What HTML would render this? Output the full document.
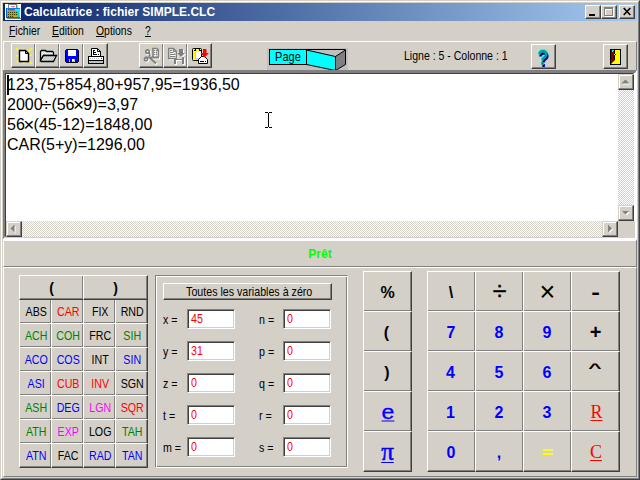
<!DOCTYPE html>
<html lang="fr"><head><meta charset="utf-8"><title>Calculatrice : fichier SIMPLE.CLC</title>
<style>
html,body{margin:0;padding:0}
body{width:640px;height:480px;overflow:hidden;background:#d4d0c8;position:relative;font-family:"Liberation Sans",sans-serif;font-size:13px;color:#000;cursor:default}
.a,.t,.b,.k,.f,.in{position:absolute;box-sizing:border-box}
.t{white-space:nowrap}
.op{display:inline-block;width:8.8px;text-indent:-1.5px;font-size:19px;line-height:1px;position:relative;top:.6px}
u{text-decoration:underline;text-decoration-thickness:1px;text-underline-offset:1px}
.win{left:0;top:0;width:640px;height:480px;border:1px solid;border-color:#d4d0c8 #404040 #404040 #d4d0c8}
.win2{left:1px;top:1px;width:638px;height:478px;border:1px solid;border-color:#fff #808080 #808080 #fff}
.title{left:3px;top:3px;width:634px;height:18px;background:linear-gradient(90deg,#0a246a,#a6caf0)}
.raised{border:1px solid;border-color:#fff #808080 #808080 #fff}
/* standard button: white TL, 808080 inner BR, 404040 outer BR */
.b{background:#d4d0c8;border:1px solid;border-color:#fff #404040 #404040 #fff;box-shadow:inset -1px -1px 0 #808080}
.sunk{border:1px solid;border-color:#808080 #fff #fff #808080;box-shadow:inset 1px 1px 0 #404040, inset -1px -1px 0 #d4d0c8}
.chk{background-color:#fff;background-image:linear-gradient(45deg,#d4d0c8 25%,transparent 25%,transparent 75%,#d4d0c8 75%),linear-gradient(45deg,#d4d0c8 25%,transparent 25%,transparent 75%,#d4d0c8 75%);background-size:2px 2px;background-position:0 0,1px 1px}
.f{width:33px;height:25px;background:#d4d0c8;border:1px solid;border-color:#fff #404040 #404040 #fff;box-shadow:inset -1px -1px 0 #808080}
.k{width:49px;height:41px;background:#d4d0c8;border:1px solid;border-color:#fff #404040 #404040 #fff;box-shadow:inset -1px -1px 0 #808080}
.in{width:48px;height:20px;background:#fff;border:1px solid;border-color:#808080 #fff #fff #808080;box-shadow:inset 1px 1px 0 #404040, inset -1px -1px 0 #d4d0c8}
.lbl{position:absolute;left:0;top:0;width:100%;height:100%;display:flex;align-items:center;justify-content:center;white-space:nowrap}
svg{position:absolute;overflow:visible}
</style></head><body>

<div class="a win"></div><div class="a win2"></div>
<div class="a title"></div>
<span class="t ttl" style="top:5px;font-size:13px;line-height:13px;left:24px;transform-origin:0 50%;transform:scaleX(0.925);color:#fff;font-weight:bold;">Calculatrice : fichier SIMPLE.CLC</span>
<svg style="left:5px;top:4px" width="16" height="16" viewBox="5 4 16 16" shape-rendering="crispEdges"><rect x="5" y="4" width="16" height="16" fill="#fff"/><rect x="8" y="4" width="9" height="1" fill="#808080"/><rect x="8" y="5" width="1" height="3" fill="#808080"/><rect x="16" y="5" width="1" height="3" fill="#808080"/><rect x="17" y="5" width="1" height="3" fill="#c0c0c0"/><rect x="11" y="6" width="4" height="1" fill="#ff8080"/><rect x="12" y="7" width="2" height="1" fill="#ffc0c0"/><rect x="6" y="8" width="14" height="10" fill="#0060c0"/><rect x="7" y="9" width="13" height="8" fill="#0ff"/><rect x="6" y="8" width="14" height="1" fill="#0080ff"/><rect x="7" y="11" width="12" height="6" fill="#00d8d8"/><rect x="8" y="9" width="7" height="2" fill="#c04040"/><rect x="8" y="10" width="7" height="1" fill="#a08080"/><rect x="8" y="12" width="1" height="1" fill="#404000"/><rect x="10" y="12" width="1" height="1" fill="#404000"/><rect x="12" y="12" width="1" height="1" fill="#404000"/><rect x="14" y="12" width="1" height="1" fill="#404000"/><rect x="16" y="12" width="1" height="1" fill="#404000"/><rect x="8" y="14" width="1" height="1" fill="#404000"/><rect x="10" y="14" width="1" height="1" fill="#404000"/><rect x="12" y="14" width="1" height="1" fill="#404000"/><rect x="14" y="14" width="1" height="1" fill="#404000"/><rect x="16" y="14" width="1" height="1" fill="#404000"/><rect x="8" y="16" width="1" height="1" fill="#404000"/><rect x="10" y="16" width="1" height="1" fill="#404000"/><rect x="12" y="16" width="1" height="1" fill="#404000"/><rect x="14" y="16" width="1" height="1" fill="#404000"/><rect x="16" y="16" width="1" height="1" fill="#404000"/><rect x="14" y="16" width="3" height="1" fill="#c0c000"/><rect x="7" y="18" width="14" height="1" fill="#808080"/></svg>
<div class="b" style="left:585px;top:5px;width:16px;height:14px"></div>
<div class="b" style="left:601px;top:5px;width:16px;height:14px"></div>
<div class="b" style="left:619px;top:5px;width:16px;height:14px"></div>
<div class="a" style="left:589px;top:14px;width:6px;height:2px;background:#000"></div>
<div class="a" style="left:605px;top:8px;width:9px;height:9px;border:1px solid #fff;border-top-width:2px"></div>
<div class="a" style="left:604px;top:7px;width:9px;height:9px;border:1px solid #808080;border-top-width:2px"></div>
<svg style="left:623px;top:8px" width="8" height="7" viewBox="0 0 8 7"><path d="M0.7 0L7.3 7M7.3 0L0.7 7" stroke="#000" stroke-width="1.6" fill="none"/></svg>
<span class="t " style="top:24px;font-size:13px;line-height:13px;left:9px;transform-origin:0 50%;transform:scaleX(0.8);"><u>F</u>ichier</span>
<span class="t " style="top:24px;font-size:13px;line-height:13px;left:52px;transform-origin:0 50%;transform:scaleX(0.8);"><u>E</u>dition</span>
<span class="t " style="top:24px;font-size:13px;line-height:13px;left:96px;transform-origin:0 50%;transform:scaleX(0.8);"><u>O</u>ptions</span>
<span class="t " style="top:24px;font-size:13px;line-height:13px;left:145px;transform-origin:0 50%;transform:scaleX(0.8);"><u>?</u></span>
<div class="a raised" style="left:3px;top:41px;width:634px;height:30px"></div>
<div class="b" style="left:11px;top:43px;width:25px;height:25px"></div>
<div class="b" style="left:35px;top:43px;width:25px;height:25px"></div>
<div class="b" style="left:59px;top:43px;width:25px;height:25px"></div>
<div class="b" style="left:83px;top:43px;width:25px;height:25px"></div>
<div class="b" style="left:139px;top:43px;width:25px;height:25px"></div>
<div class="b" style="left:163px;top:43px;width:25px;height:25px"></div>
<div class="b" style="left:187px;top:43px;width:25px;height:25px"></div>
<div class="b" style="left:531px;top:44px;width:25px;height:25px"></div>
<div class="b" style="left:603px;top:44px;width:25px;height:25px"></div>
<span class="t " style="top:49px;font-size:13px;line-height:13px;left:404px;transform-origin:0 50%;transform:scaleX(0.81);">Ligne : 5 - Colonne : 1</span>
<svg style="left:11px;top:44px" width="24" height="24" viewBox="11 44 24 24"><line x1="16" y1="48" x2="18.5" y2="50.5" stroke="#ff0" stroke-width="1.4"/><line x1="23" y1="48.5" x2="24" y2="50" stroke="#ff0" stroke-width="1.4"/><line x1="32" y1="48" x2="27.5" y2="52.5" stroke="#ff0" stroke-width="1.4"/><line x1="16" y1="56" x2="18.5" y2="55.5" stroke="#ff0" stroke-width="1.4"/><line x1="29.5" y1="55.5" x2="32" y2="55" stroke="#ff0" stroke-width="1.4"/><line x1="16.5" y1="62.5" x2="19" y2="60.5" stroke="#ff0" stroke-width="1.4"/><line x1="23.5" y1="62" x2="24.5" y2="64" stroke="#ff0" stroke-width="1.4"/><line x1="29" y1="61" x2="32" y2="64" stroke="#ff0" stroke-width="1.4"/><path d="M19.5 50.5H25.5L28.5 53.5V61.5H19.5Z" fill="#fff" stroke="#000" stroke-width="1.4"/><path d="M25.5 50.5V53.5H28.5" fill="none" stroke="#000" stroke-width="1"/></svg>
<svg style="left:35px;top:44px" width="24" height="24" viewBox="35 44 24 24"><defs><pattern id="d1" width="2" height="2" patternUnits="userSpaceOnUse"><rect width="2" height="2" fill="#ff0"/><rect width="1" height="1" fill="#fff"/><rect x="1" y="1" width="1" height="1" fill="#fff"/></pattern><pattern id="d2" width="2" height="2" patternUnits="userSpaceOnUse"><rect width="2" height="2" fill="#ff0"/><rect width="1" height="1" fill="#c0c0c0"/><rect x="1" y="1" width="1" height="1" fill="#c0c0c0"/></pattern></defs><path d="M40.5 51.5L41.5 50.5H45.5L46.5 51.5H52.5L53.5 52.5V55.5H43.5L40.5 60.5Z" fill="url(#d1)" stroke="#000" stroke-width="1.3"/><path d="M43.5 55.5H56.5L53.5 61.5H41.5L40.5 60.5Z" fill="url(#d2)" stroke="#000" stroke-width="1.3"/></svg>
<svg style="left:59px;top:44px" width="24" height="24" viewBox="59 44 24 24"><path d="M66.5 49.5H77.5L78.5 50.5V61.5L77.5 62.5H66.5L65.5 61.5V50.5Z" fill="#00f" stroke="#000" stroke-width="1"/><rect x="68" y="50" width="8" height="6" fill="#fff"/><rect x="69" y="59" width="6" height="3" fill="#c0c0c0"/><rect x="70" y="59" width="2" height="3" fill="#00f"/><rect x="72" y="59" width="2" height="2" fill="#fff"/><rect x="68" y="57" width="8" height="1" fill="#0000c0"/></svg>
<svg style="left:83px;top:44px" width="24" height="24" viewBox="83 44 24 24"><path d="M91.5 48.5H97.5L100.5 51.5V56.5H91.5Z" fill="#fff" stroke="#000" stroke-width="1"/><path d="M97.5 48.5V51.5H100.5" fill="none" stroke="#000"/><rect x="93" y="50" width="2" height="1" fill="#000"/><rect x="93" y="52" width="3" height="1" fill="#000"/><rect x="93" y="54" width="4" height="1" fill="#000"/><rect x="98" y="54" width="1" height="1" fill="#000"/><rect x="93" y="51" width="1" height="3" fill="#000"/><rect x="88" y="56" width="16" height="8" fill="#000"/><rect x="89" y="57" width="14" height="3" fill="#fff"/><rect x="89" y="61" width="14" height="2" fill="#c0c0c0"/><rect x="90" y="58" width="1" height="1" fill="#c0c0c0"/><rect x="92" y="58" width="1" height="1" fill="#c0c0c0"/><rect x="94" y="58" width="1" height="1" fill="#c0c0c0"/><rect x="96" y="58" width="1" height="1" fill="#c0c0c0"/><rect x="98" y="58" width="1" height="1" fill="#c0c0c0"/><rect x="101" y="58" width="1" height="1" fill="#f00"/></svg>
<svg style="left:139px;top:44px" width="24" height="24" viewBox="139 44 24 24"><g transform="translate(1,1)" fill="#fff" stroke="#fff"><path d="M153 57V48.5H157L158.5 50V57" fill="none" stroke-width="1.6"/><rect x="154" y="50" width="1" height="1" stroke="none"/><rect x="154" y="52" width="1" height="1" stroke="none"/><rect x="154" y="54" width="1" height="1" stroke="none"/><rect x="156" y="52" width="1" height="1" stroke="none"/><rect x="156" y="54" width="1" height="1" stroke="none"/><rect x="156" y="50" width="2" height="1" stroke="none"/><circle cx="147.5" cy="51.5" r="1.7" fill="none" stroke-width="1.7"/><circle cx="146" cy="59.3" r="1.6" fill="none" stroke-width="1.7"/><path d="M149.3 52.5L149.8 56.5" fill="none" stroke-width="1.8"/><path d="M145 57.5H159" fill="none" stroke-width="1.9"/><path d="M150 58L156 63.5" fill="none" stroke-width="2"/></g><g fill="#808080" stroke="#808080"><path d="M153 57V48.5H157L158.5 50V57" fill="none" stroke-width="1.6"/><rect x="154" y="50" width="1" height="1" stroke="none"/><rect x="154" y="52" width="1" height="1" stroke="none"/><rect x="154" y="54" width="1" height="1" stroke="none"/><rect x="156" y="52" width="1" height="1" stroke="none"/><rect x="156" y="54" width="1" height="1" stroke="none"/><rect x="156" y="50" width="2" height="1" stroke="none"/><circle cx="147.5" cy="51.5" r="1.7" fill="none" stroke-width="1.7"/><circle cx="146" cy="59.3" r="1.6" fill="none" stroke-width="1.7"/><path d="M149.3 52.5L149.8 56.5" fill="none" stroke-width="1.8"/><path d="M145 57.5H159" fill="none" stroke-width="1.9"/><path d="M150 58L156 63.5" fill="none" stroke-width="2"/></g></svg>
<svg style="left:163px;top:44px" width="24" height="24" viewBox="163 44 24 24"><g transform="translate(1,1)" fill="#fff" stroke="#fff"><path d="M168.7 48.5H173.5L176.5 51.5V58.5H168.7Z" fill="none" stroke-width="1.5"/><path d="M173.5 48.5V51.5H176.5" fill="none"/><rect x="170" y="50" width="2" height="1" stroke="none"/><rect x="170" y="52" width="3" height="1" stroke="none"/><rect x="170" y="54" width="5" height="1" stroke="none"/><rect x="170" y="56" width="5" height="1" stroke="none"/><path d="M179 49h4v4h2l-4 4l-4 -4h2z" stroke="none"/><rect x="174" y="59" width="2" height="5" stroke="none"/><rect x="182" y="57" width="2" height="7" stroke="none"/><rect x="176" y="59" width="6" height="1" stroke="none"/></g><g fill="#808080" stroke="#808080"><path d="M168.7 48.5H173.5L176.5 51.5V58.5H168.7Z" fill="none" stroke-width="1.5"/><path d="M173.5 48.5V51.5H176.5" fill="none"/><rect x="170" y="50" width="2" height="1" stroke="none"/><rect x="170" y="52" width="3" height="1" stroke="none"/><rect x="170" y="54" width="5" height="1" stroke="none"/><rect x="170" y="56" width="5" height="1" stroke="none"/><path d="M179 49h4v4h2l-4 4l-4 -4h2z" stroke="none"/><rect x="174" y="59" width="2" height="5" stroke="none"/><rect x="182" y="57" width="2" height="7" stroke="none"/><rect x="176" y="59" width="6" height="1" stroke="none"/></g></svg>
<svg style="left:187px;top:44px" width="24" height="24" viewBox="187 44 24 24"><rect x="192.5" y="48.5" width="9" height="12" rx="1" fill="#ff0" stroke="#000"/><rect x="195" y="52" width="6" height="7" fill="#c0c0ff"/><rect x="196" y="52" width="5" height="6" fill="#fff"/><rect x="195" y="48" width="5" height="2" fill="#000"/><rect x="196" y="49" width="3" height="2" fill="#ff0"/><rect x="194" y="50" width="2" height="1" fill="#000"/><rect x="199" y="50" width="2" height="1" fill="#000"/><path d="M198.5 63.5V59.5L201.5 56.5H204.5L207.5 59.5V63.5Z" fill="#fff" stroke="#000"/><rect x="200" y="61" width="4" height="1" fill="#000"/><rect x="205" y="61" width="1" height="1" fill="#000"/><path d="M203 49h3.5v4h2.4l-4.2 4.6l-4.2 -4.6h2.5z" fill="#f00"/></svg>
<svg style="left:603px;top:44px" width="24" height="24" viewBox="603 44 24 24"><rect x="610" y="49" width="11" height="16" fill="#000"/><rect x="611" y="50" width="9" height="14" fill="#ff0"/><path d="M611 50h4v10l-4 4z" fill="#800000"/><rect x="614" y="50" width="1" height="10" fill="#000"/><rect x="612" y="50" width="2" height="1" fill="#0ff"/><rect x="612" y="51" width="1" height="1" fill="#0ff"/><rect x="615" y="54" width="1" height="1" fill="#000"/><rect x="614" y="54" width="1" height="1" fill="#ff0"/></svg>
<span class="t" style="left:531px;top:45px;width:24px;height:24px;line-height:25px;text-align:center;font-weight:bold;font-size:21px;transform:scale(.88,1.06);color:#00a0a0;text-shadow:1px 1px 0 #000080,-1px -1px 0 #0ff">?</span>
<div class="a" style="left:267px;top:48px;width:81px;height:22px;background:#c0c0c0"></div>
<svg style="left:300px;top:44px" width="50" height="28" viewBox="300 44 50 28"><path d="M307 49.5H345.5" stroke="#000" fill="none"/><path d="M335.5 56.5L345.5 50V64.5L335.5 70.5Z" fill="#808080" stroke="#000"/><path d="M306.5 50L335.5 56.5V70.5L306.5 64.5Z" fill="#0ff" stroke="#000"/></svg>
<div class="a" style="left:269px;top:49px;width:38px;height:16px;background:#0ff;border:1px solid #000"></div>
<span class="t " style="top:50px;font-size:13px;line-height:13px;left:258.0px;width:60px;text-align:center;transform-origin:50% 50%;transform:scaleX(0.85);">Page</span>
<div class="a" style="left:3px;top:70px;width:634px;height:169px;background:#fff;border:solid;border-width:3px 2px 2px 2px;border-color:#808080 #fff #fff #808080"></div>
<div class="a" style="left:5px;top:73px;width:629px;height:164px;border:1px solid;border-color:#404040 #d4d0c8 #d4d0c8 #404040"></div>
<div class="a chk" style="left:618px;top:74px;width:16px;height:147px"></div>
<div class="a chk" style="left:6px;top:221px;width:612px;height:16px"></div>
<div class="a" style="left:618px;top:221px;width:17px;height:17px;background:#d4d0c8"></div>
<div class="a" style="left:5px;top:237px;width:630px;height:1px;background:#d4d0c8"></div>
<div class="b" style="left:618px;top:74px;width:16px;height:16px;border-color:#d4d0c8 #404040 #404040 #d4d0c8;box-shadow:inset -1px -1px 0 #808080, inset 1px 1px 0 #fff"></div>
<div class="b" style="left:618px;top:205px;width:16px;height:16px;border-color:#d4d0c8 #404040 #404040 #d4d0c8;box-shadow:inset -1px -1px 0 #808080, inset 1px 1px 0 #fff"></div>
<div class="b" style="left:6px;top:221px;width:16px;height:16px;border-color:#d4d0c8 #404040 #404040 #d4d0c8;box-shadow:inset -1px -1px 0 #808080, inset 1px 1px 0 #fff"></div>
<div class="b" style="left:602px;top:221px;width:16px;height:16px;border-color:#d4d0c8 #404040 #404040 #d4d0c8;box-shadow:inset -1px -1px 0 #808080, inset 1px 1px 0 #fff"></div>
<svg style="left:0;top:0" width="640" height="480" viewBox="0 0 640 480"><polygon points="626.5,80.5 630.5,84.5 622.5,84.5" fill="#fff"/><polygon points="625.5,79.5 629.5,83.5 621.5,83.5" fill="#808080"/><polygon points="623,212 630,212 626.5,215.5" fill="#fff"/><polygon points="622,211 629,211 625.5,214.5" fill="#808080"/><polygon points="11.5,229.5 15.5,225.5 15.5,233.5" fill="#fff"/><polygon points="10.5,228.5 14.5,224.5 14.5,232.5" fill="#808080"/><polygon points="609,225.5 613,229.5 609,233.5" fill="#fff"/><polygon points="608,224.5 612,228.5 608,232.5" fill="#808080"/><path d="M265 112.5h3M269 112.5h3M268.5 113v14M265 127.5h3M269 127.5h3" stroke="#000" fill="none" shape-rendering="crispEdges"/></svg>
<span class="t " style="top:77px;font-size:16px;line-height:16px;left:7px;transform-origin:0 50%;">123,75+854,80+957,95=1936,50</span>
<span class="t " style="top:97px;font-size:16px;line-height:16px;left:7px;transform-origin:0 50%;">2000<span class="op">÷</span>(56<span class="op">×</span>9)=3,97</span>
<span class="t " style="top:117px;font-size:16px;line-height:16px;left:7px;transform-origin:0 50%;">56<span class="op">×</span>(45-12)=1848,00</span>
<span class="t " style="top:137px;font-size:16px;line-height:16px;left:7px;transform-origin:0 50%;">CAR(5+y)=1296,00</span>
<div class="a" style="left:7px;top:75px;width:2px;height:20px;background:#000"></div>
<div class="a raised" style="left:3px;top:239px;width:634px;height:28px;border-top-width:2px"></div>
<span class="t " style="top:248px;font-size:12px;line-height:12px;left:270.0px;width:100px;text-align:center;transform-origin:50% 50%;color:#0f0;font-weight:bold;">Prêt</span>
<div class="a raised" style="left:3px;top:267px;width:634px;height:210px"></div>
<div class="f" style="left:19px;top:299px"><span class="lbl" style="color:#000;transform:translateX(.7px) scaleX(.82)">ABS</span></div>
<div class="f" style="left:51px;top:299px"><span class="lbl" style="color:#f00;transform:translateX(.7px) scaleX(.82)">CAR</span></div>
<div class="f" style="left:83px;top:299px"><span class="lbl" style="color:#000;transform:translateX(.7px) scaleX(.82)">FIX</span></div>
<div class="f" style="left:115px;top:299px"><span class="lbl" style="color:#000;transform:translateX(.7px) scaleX(.82)">RND</span></div>
<div class="f" style="left:19px;top:323px"><span class="lbl" style="color:#008000;transform:translateX(.7px) scaleX(.82)">ACH</span></div>
<div class="f" style="left:51px;top:323px"><span class="lbl" style="color:#008000;transform:translateX(.7px) scaleX(.82)">COH</span></div>
<div class="f" style="left:83px;top:323px"><span class="lbl" style="color:#000;transform:translateX(.7px) scaleX(.82)">FRC</span></div>
<div class="f" style="left:115px;top:323px"><span class="lbl" style="color:#008000;transform:translateX(.7px) scaleX(.82)">SIH</span></div>
<div class="f" style="left:19px;top:347px"><span class="lbl" style="color:#00f;transform:translateX(.7px) scaleX(.82)">ACO</span></div>
<div class="f" style="left:51px;top:347px"><span class="lbl" style="color:#00f;transform:translateX(.7px) scaleX(.82)">COS</span></div>
<div class="f" style="left:83px;top:347px"><span class="lbl" style="color:#000;transform:translateX(.7px) scaleX(.82)">INT</span></div>
<div class="f" style="left:115px;top:347px"><span class="lbl" style="color:#00f;transform:translateX(.7px) scaleX(.82)">SIN</span></div>
<div class="f" style="left:19px;top:371px"><span class="lbl" style="color:#00f;transform:translateX(.7px) scaleX(.82)">ASI</span></div>
<div class="f" style="left:51px;top:371px"><span class="lbl" style="color:#f00;transform:translateX(.7px) scaleX(.82)">CUB</span></div>
<div class="f" style="left:83px;top:371px"><span class="lbl" style="color:#f00;transform:translateX(.7px) scaleX(.82)">INV</span></div>
<div class="f" style="left:115px;top:371px"><span class="lbl" style="color:#000;transform:translateX(.7px) scaleX(.82)">SGN</span></div>
<div class="f" style="left:19px;top:395px"><span class="lbl" style="color:#008000;transform:translateX(.7px) scaleX(.82)">ASH</span></div>
<div class="f" style="left:51px;top:395px"><span class="lbl" style="color:#00f;transform:translateX(.7px) scaleX(.82)">DEG</span></div>
<div class="f" style="left:83px;top:395px"><span class="lbl" style="color:#f0f;transform:translateX(.7px) scaleX(.82)">LGN</span></div>
<div class="f" style="left:115px;top:395px"><span class="lbl" style="color:#f00;transform:translateX(.7px) scaleX(.82)">SQR</span></div>
<div class="f" style="left:19px;top:419px"><span class="lbl" style="color:#008000;transform:translateX(.7px) scaleX(.82)">ATH</span></div>
<div class="f" style="left:51px;top:419px"><span class="lbl" style="color:#f0f;transform:translateX(.7px) scaleX(.82)">EXP</span></div>
<div class="f" style="left:83px;top:419px"><span class="lbl" style="color:#000;transform:translateX(.7px) scaleX(.82)">LOG</span></div>
<div class="f" style="left:115px;top:419px"><span class="lbl" style="color:#008000;transform:translateX(.7px) scaleX(.82)">TAH</span></div>
<div class="f" style="left:19px;top:443px"><span class="lbl" style="color:#00f;transform:translateX(.7px) scaleX(.82)">ATN</span></div>
<div class="f" style="left:51px;top:443px"><span class="lbl" style="color:#000;transform:translateX(.7px) scaleX(.82)">FAC</span></div>
<div class="f" style="left:83px;top:443px"><span class="lbl" style="color:#00f;transform:translateX(.7px) scaleX(.82)">RAD</span></div>
<div class="f" style="left:115px;top:443px"><span class="lbl" style="color:#00f;transform:translateX(.7px) scaleX(.82)">TAN</span></div>
<div class="f" style="left:19px;top:275px;width:65px"><span class="lbl" style="font-weight:bold;font-size:14px">(</span></div>
<div class="f" style="left:83px;top:275px;width:65px"><span class="lbl" style="font-weight:bold;font-size:14px">)</span></div>
<div class="a" style="left:155px;top:275px;width:193px;height:193px;border:1px solid;border-color:#808080 #fff #fff #808080;box-shadow:inset 1px 1px 0 #fff, inset -1px -1px 0 #808080"></div>
<div class="b" style="left:163px;top:283px;width:169px;height:17px"><span class="lbl" style="transform:translateX(1.7px) scaleX(.82)">Toutes les variables à zéro</span></div>
<span class="t " style="top:313px;font-size:13px;line-height:13px;left:163px;transform-origin:0 50%;transform:scaleX(0.82);">x =</span>
<div class="in" style="left:187px;top:309px"></div>
<span class="t " style="top:312px;font-size:13px;line-height:13px;left:191px;transform-origin:0 50%;transform:scaleX(0.82);color:#f00;">45</span>
<span class="t " style="top:313px;font-size:13px;line-height:13px;left:259px;transform-origin:0 50%;transform:scaleX(0.82);">n =</span>
<div class="in" style="left:283px;top:309px"></div>
<span class="t " style="top:312px;font-size:13px;line-height:13px;left:287px;transform-origin:0 50%;transform:scaleX(0.82);color:#f00;">0</span>
<span class="t " style="top:345px;font-size:13px;line-height:13px;left:163px;transform-origin:0 50%;transform:scaleX(0.82);">y =</span>
<div class="in" style="left:187px;top:341px"></div>
<span class="t " style="top:344px;font-size:13px;line-height:13px;left:191px;transform-origin:0 50%;transform:scaleX(0.82);color:#f00;">31</span>
<span class="t " style="top:345px;font-size:13px;line-height:13px;left:259px;transform-origin:0 50%;transform:scaleX(0.82);">p =</span>
<div class="in" style="left:283px;top:341px"></div>
<span class="t " style="top:344px;font-size:13px;line-height:13px;left:287px;transform-origin:0 50%;transform:scaleX(0.82);color:#f00;">0</span>
<span class="t " style="top:377px;font-size:13px;line-height:13px;left:163px;transform-origin:0 50%;transform:scaleX(0.82);">z =</span>
<div class="in" style="left:187px;top:373px"></div>
<span class="t " style="top:376px;font-size:13px;line-height:13px;left:191px;transform-origin:0 50%;transform:scaleX(0.82);color:#f00;">0</span>
<span class="t " style="top:377px;font-size:13px;line-height:13px;left:259px;transform-origin:0 50%;transform:scaleX(0.82);">q =</span>
<div class="in" style="left:283px;top:373px"></div>
<span class="t " style="top:376px;font-size:13px;line-height:13px;left:287px;transform-origin:0 50%;transform:scaleX(0.82);color:#f00;">0</span>
<span class="t " style="top:409px;font-size:13px;line-height:13px;left:163px;transform-origin:0 50%;transform:scaleX(0.82);">t =</span>
<div class="in" style="left:187px;top:405px"></div>
<span class="t " style="top:408px;font-size:13px;line-height:13px;left:191px;transform-origin:0 50%;transform:scaleX(0.82);color:#f00;">0</span>
<span class="t " style="top:409px;font-size:13px;line-height:13px;left:259px;transform-origin:0 50%;transform:scaleX(0.82);">r =</span>
<div class="in" style="left:283px;top:405px"></div>
<span class="t " style="top:408px;font-size:13px;line-height:13px;left:287px;transform-origin:0 50%;transform:scaleX(0.82);color:#f00;">0</span>
<span class="t " style="top:441px;font-size:13px;line-height:13px;left:163px;transform-origin:0 50%;transform:scaleX(0.82);">m =</span>
<div class="in" style="left:187px;top:437px"></div>
<span class="t " style="top:440px;font-size:13px;line-height:13px;left:191px;transform-origin:0 50%;transform:scaleX(0.82);color:#f00;">0</span>
<span class="t " style="top:441px;font-size:13px;line-height:13px;left:259px;transform-origin:0 50%;transform:scaleX(0.82);">s =</span>
<div class="in" style="left:283px;top:437px"></div>
<span class="t " style="top:440px;font-size:13px;line-height:13px;left:287px;transform-origin:0 50%;transform:scaleX(0.82);color:#f00;">0</span>
<div class="k" style="left:363px;top:271px"><span class="lbl" style="font-weight:bold;font-size:16px;color:#000;transform:translate(0.0px,1.0px);">%</span></div>
<div class="k" style="left:363px;top:311px"><span class="lbl" style="font-weight:bold;font-size:16px;color:#000;transform:translate(-1.0px,1.0px);">(</span></div>
<div class="k" style="left:363px;top:351px"><span class="lbl" style="font-weight:bold;font-size:16px;color:#000;transform:translate(-0.5px,1.0px);">)</span></div>
<div class="k" style="left:363px;top:391px"><span class="lbl" style="font-weight:normal;font-size:21px;color:#00f;transform:translate(0.5px,-0.5px) scale(1.1,1);-webkit-text-stroke:.3px #00f;"><u style="text-decoration:underline;text-decoration-thickness:1px;text-underline-offset:2px">e</u></span></div>
<div class="k" style="left:363px;top:431px"><span class="lbl" style="font-weight:normal;font-size:25px;color:#00f;transform:translate(0px,0px);font-family:'Liberation Serif',serif;-webkit-text-stroke:.5px #00f;"><u style="text-decoration:underline;text-decoration-thickness:1px;text-underline-offset:1.5px">π</u></span></div>
<div class="k" style="left:427px;top:271px"><span class="lbl" style="font-weight:bold;font-size:16px;color:#000;transform:translate(-0.5px,1.0px);">\</span></div>
<div class="k" style="left:475px;top:271px"><span class="lbl" style="font-weight:normal;font-size:25px;color:#000;transform:translate(0.0px,0.0px);-webkit-text-stroke:.4px #000;">÷</span></div>
<div class="k" style="left:523px;top:271px"><span class="lbl" style="font-weight:normal;font-size:27px;color:#000;transform:translate(0.0px,0.5px);">×</span></div>
<div class="k" style="left:571px;top:271px"><span class="lbl" style="font-weight:bold;font-size:26px;color:#000;transform:translate(0px,1.0px) scale(1,0.75);">-</span></div>
<div class="k" style="left:427px;top:311px"><span class="lbl" style="font-weight:bold;font-size:16px;color:#00f;transform:translate(-0.5px,1.0px);">7</span></div>
<div class="k" style="left:475px;top:311px"><span class="lbl" style="font-weight:bold;font-size:16px;color:#00f;transform:translate(-0.5px,1.0px);">8</span></div>
<div class="k" style="left:523px;top:311px"><span class="lbl" style="font-weight:bold;font-size:16px;color:#00f;transform:translate(-0.5px,1.0px);">9</span></div>
<div class="k" style="left:571px;top:311px"><span class="lbl" style="font-weight:bold;font-size:20px;color:#000;transform:translate(0px,0.5px);">+</span></div>
<div class="k" style="left:427px;top:351px"><span class="lbl" style="font-weight:bold;font-size:16px;color:#00f;transform:translate(-1.0px,1.0px);">4</span></div>
<div class="k" style="left:475px;top:351px"><span class="lbl" style="font-weight:bold;font-size:16px;color:#00f;transform:translate(-0.5px,1.0px);">5</span></div>
<div class="k" style="left:523px;top:351px"><span class="lbl" style="font-weight:bold;font-size:16px;color:#00f;transform:translate(-0.5px,1.0px);">6</span></div>
<div class="k" style="left:571px;top:351px"><span class="lbl" style="font-weight:bold;font-size:24px;color:#000;transform:translate(-0.5px,-4.0px) scale(0.95,0.5);">^</span></div>
<div class="k" style="left:427px;top:391px"><span class="lbl" style="font-weight:bold;font-size:16px;color:#00f;transform:translate(-1.0px,1.0px);">1</span></div>
<div class="k" style="left:475px;top:391px"><span class="lbl" style="font-weight:bold;font-size:16px;color:#00f;transform:translate(-0.5px,1.0px);">2</span></div>
<div class="k" style="left:523px;top:391px"><span class="lbl" style="font-weight:bold;font-size:16px;color:#00f;transform:translate(-0.5px,1.0px);">3</span></div>
<div class="k" style="left:571px;top:391px"><span class="lbl" style="font-weight:normal;font-size:18px;color:#f00;transform:translate(1.0px,1.0px);font-family:'Liberation Serif',serif;"><u style="text-decoration:underline;text-decoration-thickness:1px;text-underline-offset:1.5px">R</u></span></div>
<div class="k" style="left:427px;top:431px"><span class="lbl" style="font-weight:bold;font-size:16px;color:#00f;transform:translate(-0.5px,1.0px);">0</span></div>
<div class="k" style="left:475px;top:431px"><span class="lbl" style="font-weight:bold;font-size:16px;color:#00f;transform:translate(-0.5px,1.0px);">,</span></div>
<div class="k" style="left:523px;top:431px"><span class="lbl" style="font-weight:bold;font-size:20px;color:#ff0;transform:translate(0.0px,1.0px) scale(1,0.8);">=</span></div>
<div class="k" style="left:571px;top:431px"><span class="lbl" style="font-weight:normal;font-size:18px;color:#f00;transform:translate(0.5px,1.0px);font-family:'Liberation Serif',serif;"><u style="text-decoration:underline;text-decoration-thickness:1px;text-underline-offset:1.5px">C</u></span></div>
</body></html>
